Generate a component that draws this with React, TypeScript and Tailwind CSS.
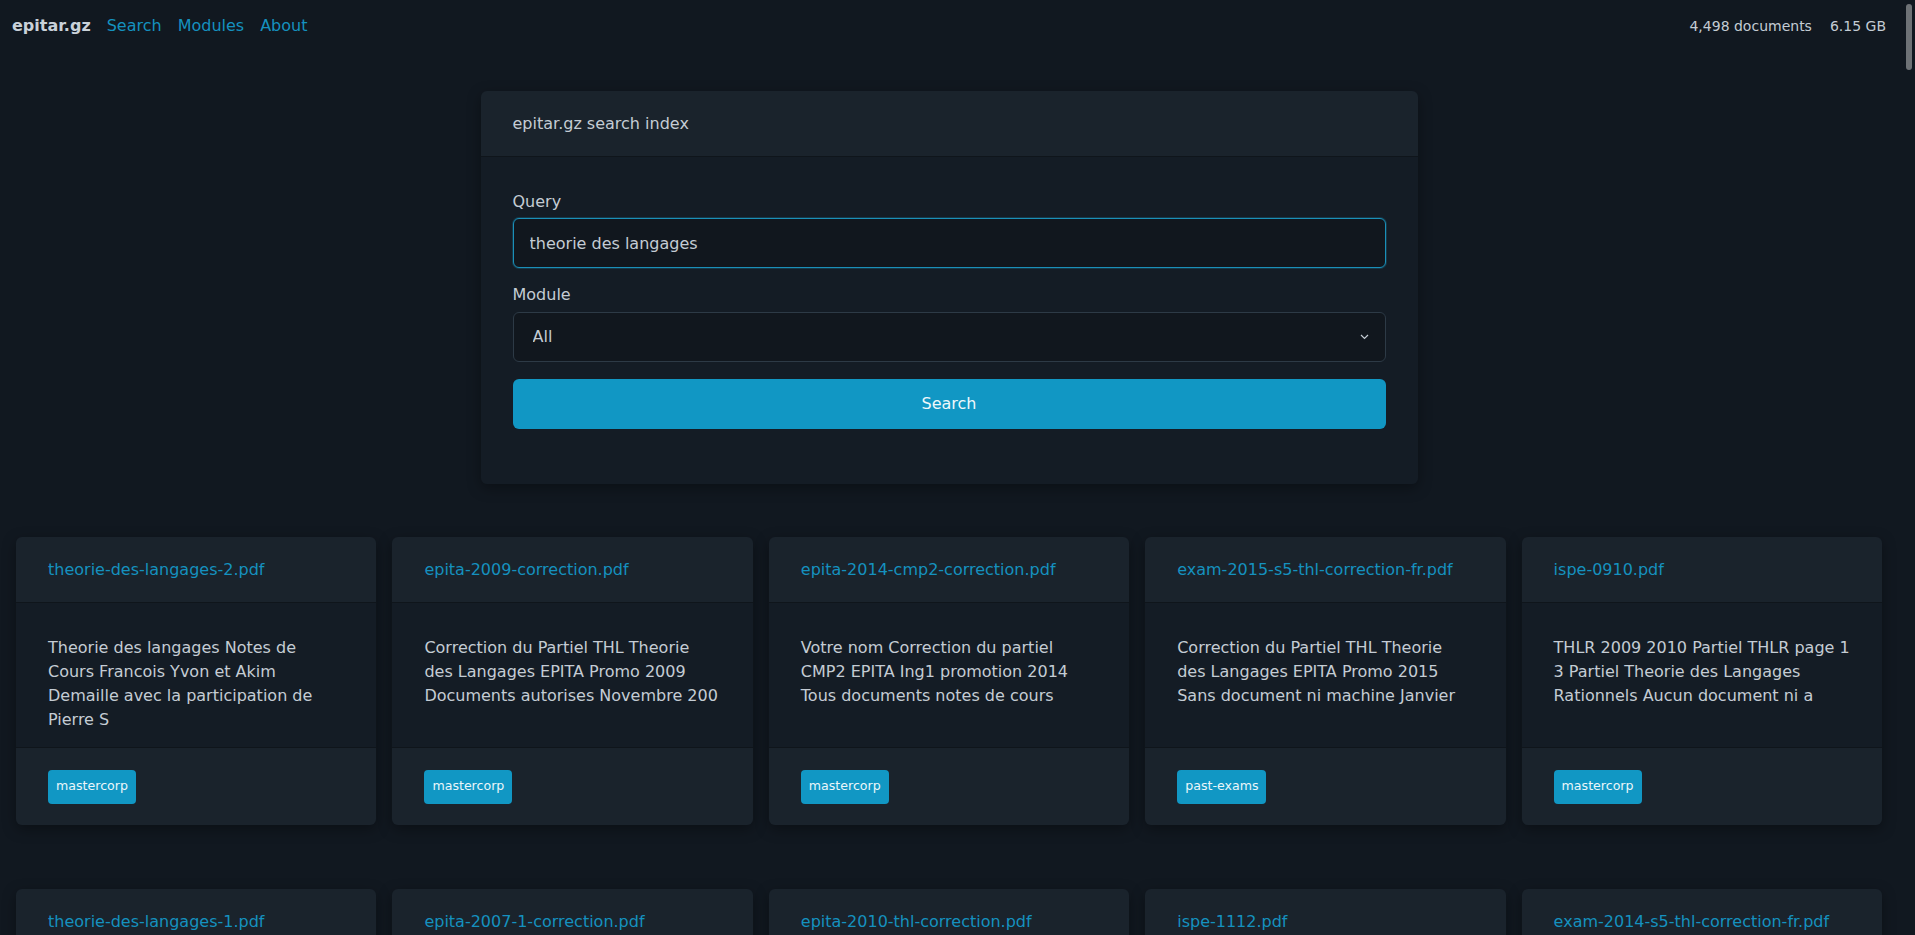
import React from "react";

type Doc = { title: string; lines: string[]; tag: string };

const docs: Doc[] = [
  {
    title: "theorie-des-langages-2.pdf",
    lines: ["Theorie des langages Notes de", "Cours Francois Yvon et Akim", "Demaille avec la participation de", "Pierre S"],
    tag: "mastercorp",
  },
  {
    title: "epita-2009-correction.pdf",
    lines: ["Correction du Partiel THL Theorie", "des Langages EPITA Promo 2009", "Documents autorises Novembre 200"],
    tag: "mastercorp",
  },
  {
    title: "epita-2014-cmp2-correction.pdf",
    lines: ["Votre nom Correction du partiel", "CMP2 EPITA Ing1 promotion 2014", "Tous documents notes de cours"],
    tag: "mastercorp",
  },
  {
    title: "exam-2015-s5-thl-correction-fr.pdf",
    lines: ["Correction du Partiel THL Theorie", "des Langages EPITA Promo 2015", "Sans document ni machine Janvier"],
    tag: "past-exams",
  },
  {
    title: "ispe-0910.pdf",
    lines: ["THLR 2009 2010 Partiel THLR page 1", "3 Partiel Theorie des Langages", "Rationnels Aucun document ni a"],
    tag: "mastercorp",
  },
  {
    title: "theorie-des-langages-1.pdf",
    lines: ["Theorie des langages Notes de", "Cours Francois Yvon et Akim", "Demaille avec la participation de", "Pierre S"],
    tag: "mastercorp",
  },
  {
    title: "epita-2007-1-correction.pdf",
    lines: ["Correction du Partiel THL Theorie", "des Langages EPITA Promo 2007", "Documents autorises Novembre 200"],
    tag: "mastercorp",
  },
  {
    title: "epita-2010-thl-correction.pdf",
    lines: ["Correction du Partiel THL Theorie", "des Langages EPITA Promo 2010", "Documents autorises Novembre 200"],
    tag: "mastercorp",
  },
  {
    title: "ispe-1112.pdf",
    lines: ["THLR 2011 2012 Partiel THLR page 1", "3 Partiel Theorie des Langages", "Rationnels Aucun document ni a"],
    tag: "mastercorp",
  },
  {
    title: "exam-2014-s5-thl-correction-fr.pdf",
    lines: ["Correction du Partiel THL Theorie", "des Langages EPITA Promo 2014", "Sans document ni machine Janvier"],
    tag: "past-exams",
  },
];

function Card({ d }: { d: Doc }) {
  return (
    <div className="rounded-md overflow-hidden shadow-[0_4px_14px_rgba(0,0,0,0.35)]">
      <div className="h-[66px] px-8 flex items-center bg-[#1a232c] border-b border-[#0f151b]">
        <a className="text-base text-[#1591bf] whitespace-nowrap">{d.title}</a>
      </div>
      <div className="h-[145px] pt-[33px] px-8 bg-[#141c25] border-b border-[#0f151b] text-base leading-6 text-[#c4ccd4]">
        {d.lines.map((l, i) => (
          <div key={i} className="whitespace-nowrap">
            {l}
          </div>
        ))}
      </div>
      <div className="h-[77px] px-8 flex items-center bg-[#1a232c]">
        <span className="h-[34px] px-2 rounded bg-[#1197c4] text-[12.6px] text-[#eaf6fa] flex items-center">{d.tag}</span>
      </div>
    </div>
  );
}

export default function App() {
  return (
    <div className="relative h-screen overflow-y-scroll [color-scheme:dark] bg-[#111820] font-['DejaVu_Sans',sans-serif] text-[#c4ccd4]">
      <div className="fixed right-[3px] top-[4px] w-[6px] h-[66px] rounded-full bg-[#6e7276] z-10" />
      <div className="pr-[17px]">
        <nav className="h-[52px] px-3 flex items-center justify-between">
          <div className="flex items-center gap-4 text-base">
            <span className="font-bold text-[#c9d1d9]">epitar.gz</span>
            <a className="text-[#1591bf]">Search</a>
            <a className="text-[#1591bf]">Modules</a>
            <a className="text-[#1591bf]">About</a>
          </div>
          <div className="flex items-center gap-[18px] text-sm text-[#c4ccd4]">
            <span>4,498 documents</span>
            <span>6.15 GB</span>
          </div>
        </nav>

        <div className="mt-[39px] w-[937px] mx-auto rounded-md overflow-hidden shadow-[0_4px_14px_rgba(0,0,0,0.35)]">
          <div className="h-[66px] px-8 flex items-center bg-[#1a232c] border-b border-[#0f151b] text-base">
            epitar.gz search index
          </div>
          <div className="bg-[#141c25] px-8 pt-[33px] pb-[55px]">
            <label className="block leading-6 mb-1 text-base">Query</label>
            <input
              defaultValue="theorie des langages"
              className="block w-full h-[50px] rounded-md border border-[#1a8fb8] bg-[#11171e] px-4 text-base text-[#c4ccd4] outline-none shadow-[0_0_0_1px_rgba(26,143,184,0.25)] font-['DejaVu_Sans',sans-serif]"
            />
            <label className="block leading-6 mt-[15px] mb-[5px] text-base">Module</label>
            <div className="relative">
              <select className="block w-full h-[50px] appearance-none rounded-md border border-[#2d3a46] bg-[#11171e] px-[19px] text-base text-[#c4ccd4] outline-none font-['DejaVu_Sans',sans-serif]">
                <option>All</option>
              </select>
              <svg
                className="absolute right-[17px] top-1/2 -translate-y-1/2 pointer-events-none"
                width="9"
                height="6"
                viewBox="0 0 9 6"
                fill="none"
              >
                <path d="M1 1l3.5 3.5L8 1" stroke="#c4ccd4" strokeWidth="1.2" />
              </svg>
            </div>
            <button className="mt-[17px] w-full h-[50px] rounded-md bg-[#1197c4] text-base text-[#eef8fb]">
              Search
            </button>
          </div>
        </div>

        <div className="mt-[53px] px-4 pb-16 grid grid-cols-5 gap-x-4 gap-y-16">
          {docs.map((d, i) => (
            <Card key={i} d={d} />
          ))}
        </div>
      </div>
    </div>
  );
}
